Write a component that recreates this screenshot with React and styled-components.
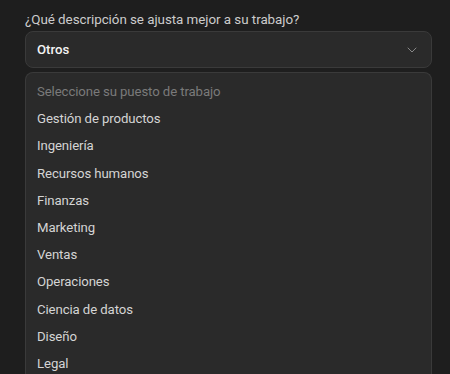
import styled, { createGlobalStyle } from "styled-components";
import { ChevronDown } from "lucide-react";

const GlobalStyle = createGlobalStyle`
  html, body {
    margin: 0;
    padding: 0;
    background: #1e1e1e;
    font-family: Roboto, "Noto Sans", sans-serif;
    overflow: hidden;
  }
`;

const jobs = [
  "Gestión de productos",
  "Ingeniería",
  "Recursos humanos",
  "Finanzas",
  "Marketing",
  "Ventas",
  "Operaciones",
  "Ciencia de datos",
  "Diseño",
  "Legal",
];

export default function App() {
  return (
    <>
      <GlobalStyle />
      <Page>
        <Label>¿Qué descripción se ajusta mejor a su trabajo?</Label>
        <Select>
          <span>Otros</span>
          <ChevronDown size={16} strokeWidth={1.4} color="#8e8e8e" />
        </Select>
        <Menu>
          <Option $placeholder>Seleccione su puesto de trabajo</Option>
          {jobs.map((job) => (
            <Option key={job}>{job}</Option>
          ))}
        </Menu>
      </Page>
    </>
  );
}

const Page = styled.div`
  display: flex;
  flex-direction: column;
  padding: 10px 18px 0 25px;
  height: 374px;
  box-sizing: border-box;
`;

const Label = styled.div`
  color: #cccccc;
  font-size: 13.4px;
  letter-spacing: -0.05px;
  line-height: 20px;
  margin-bottom: 1px;
`;

const Select = styled.div`
  display: flex;
  align-items: center;
  justify-content: space-between;
  height: 37px;
  flex-shrink: 0;
  box-sizing: border-box;
  padding: 0 11px 0 11px;
  background: #2a2a2a;
  border: 1px solid #3a3a3a;
  border-radius: 8px;
  color: #f4f4f4;
  font-size: 13.2px;
  font-weight: 500;
`;

const Menu = styled.div`
  margin-top: 4px;
  flex: 1;
  display: flex;
  flex-direction: column;
  padding: 5px 0 0 11px;
  background: #2a2a2a;
  border: 1px solid #3a3a3a;
  border-bottom: none;
  border-radius: 8px 8px 0 0;
`;

const Option = styled.div`
  height: 27.2px;
  flex-shrink: 0;
  display: flex;
  align-items: center;
  font-size: 13.2px;
  letter-spacing: -0.1px;
  color: ${(p) => (p.$placeholder ? "#7a7a7a" : "#d4d4d4")};
`;
